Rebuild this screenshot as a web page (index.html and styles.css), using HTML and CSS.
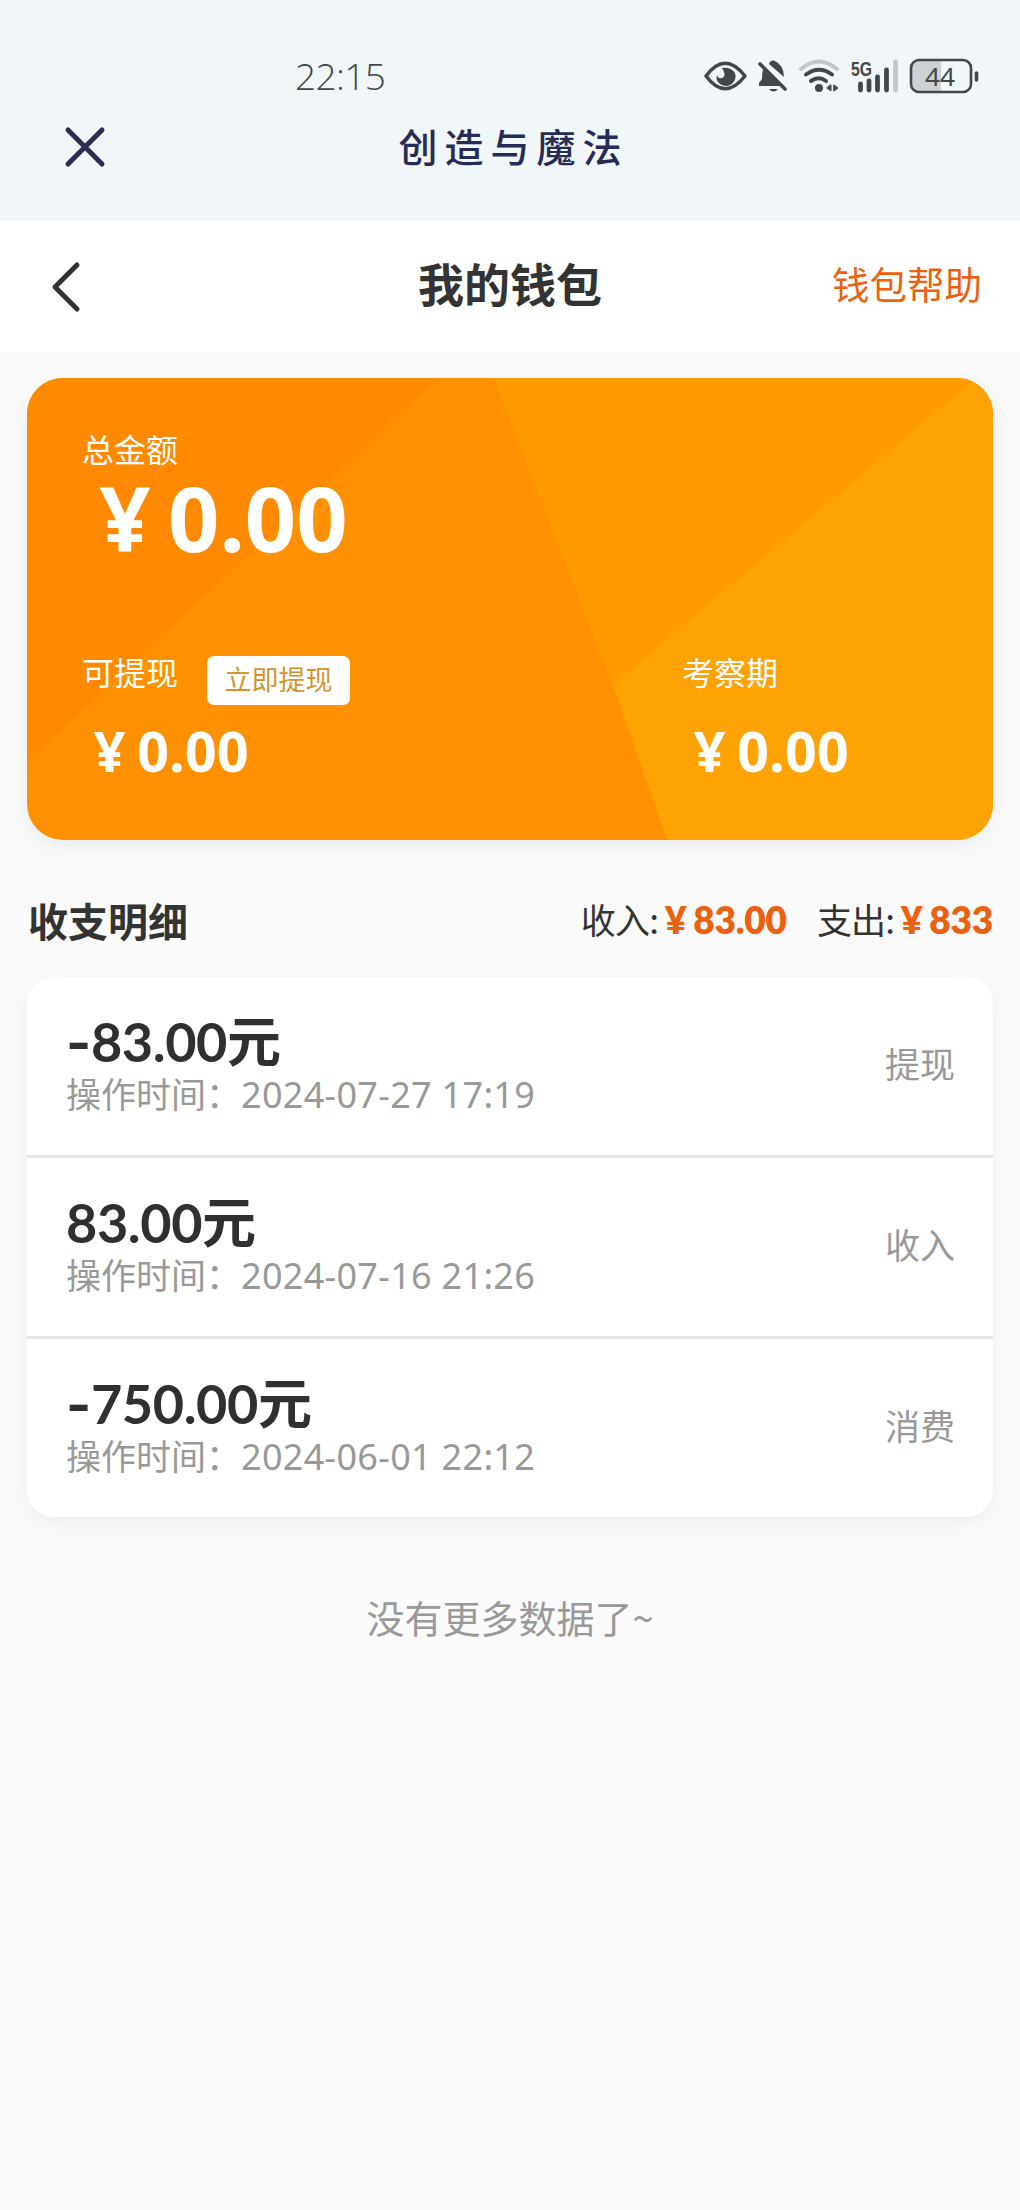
FILE: index.html
```html
<!DOCTYPE html>
<html lang="zh-CN">
<head>
<meta charset="utf-8">
<title>我的钱包</title>
<link rel="stylesheet" href="styles.css">
</head>
<body>
<header class="system">
  <div class="status">
    <span class="clock">22:15</span>
    <svg class="status-icons" width="280" height="40" viewBox="702 56 280 40" fill="none" stroke-linecap="round">
      <path d="M706 76Q725 50.500 745 76Q725 101.500 706 76Z" stroke="#434749" stroke-width="3.600" stroke-linejoin="round"/>
      <path d="M722 68Q731 67 735 73Q737 79 732 84Q726 88 720 84Q715 80 717 75Q718 79 722 78Q727 76 722 68Z" fill="#434749"/>
      <path d="M763 69Q762 74 762 79L759 83V86H781ZM769 64Q770 60 774 60.500Q784 65 784 77ZM769 89H778Q773.500 94 769 89Z" fill="#434749"/>
      <path d="M760 64L785 89" stroke="#434749" stroke-width="3.600"/>
      <path d="M801 69Q819 54 837 69" stroke="#c3c7c8" stroke-width="4"/>
      <path d="M806 74.500Q819 65 832 74.500" stroke="#434749" stroke-width="4"/>
      <path d="M811 81Q819 75.500 826 81" stroke="#434749" stroke-width="4"/>
      <circle cx="819" cy="88" r="4" fill="#434749"/>
      <path d="M831 85v6l-4-3zM834 85l4 3l-4 3z" fill="#434749" stroke="#434749" stroke-width="1"/>
      <text class="network" x="851" y="76" textLength="21" lengthAdjust="spacingAndGlyphs">5G</text>
      <path d="M860.500 84v6M869 81v9M877.500 77v13M886.500 70v20" stroke="#434749" stroke-width="4.800"/>
      <path d="M895.500 62v28" stroke="#c3c7c8" stroke-width="4.800"/>
      <path d="M919 61H941V91H919Q912 91 912 84V68Q912 61 919 61Z" fill="#ced1d3"/>
      <rect x="911" y="60" width="60" height="32" rx="8" stroke="#434749" stroke-width="2.600"/>
      <path d="M976.500 73v7" stroke="#434749" stroke-width="3.600"/>
      <text class="charge" x="925" y="86" textLength="30" lengthAdjust="spacingAndGlyphs">44</text>
    </svg>
  </div>
  <div class="app-bar">
    <svg class="close" width="44" height="44" viewBox="0 0 44 44"><path d="M5 5L39 39M39 5L5 39"/></svg>
    <span class="app-name">创造与魔法</span>
  </div>
</header>
<nav class="nav">
  <svg class="back" width="32" height="52" viewBox="0 0 32 52"><path d="M27 4L5 26L27 48"/></svg>
  <h1 class="nav-title">我的钱包</h1>
  <span class="help">钱包帮助</span>
</nav>
<main class="content">
  <section class="card">
    <svg class="card-bg" viewBox="0 0 966 462" preserveAspectRatio="none">
      <rect width="966" height="462" fill="#ff9100"/>
      <path d="M0 0H411L0 384Z" fill="#ff8900"/>
      <path d="M467 0H966V462H640L586 307Z" fill="#ffa203"/>
      <path d="M467 0H949L586 307Z" fill="#ff9a00"/>
    </svg>
    <div class="total">
      <div class="label">总金额</div>
      <div class="sum"><span class="yen">¥</span>0.00</div>
    </div>
    <div class="parts">
      <div class="part">
        <div class="part-head"><span class="label">可提现</span><span class="withdraw">立即提现</span></div>
        <div class="part-sum"><span class="yen">¥</span>0.00</div>
      </div>
      <div class="part">
        <div class="part-head"><span class="label">考察期</span></div>
        <div class="part-sum"><span class="yen">¥</span>0.00</div>
      </div>
    </div>
  </section>
  <div class="summary">
    <h2 class="summary-title">收支明细</h2>
    <span class="flow">收入:<b class="money"><span class="yen">¥</span>83.00</b></span>
    <span class="flow">支出:<b class="money"><span class="yen">¥</span>833</b></span>
  </div>
  <ul class="records">
    <li class="record">
      <div><div class="amount"><span class="minus">-</span>83.00元</div><div class="time">操作时间：<span class="date">2024-07-27 17:19</span></div></div>
      <span class="kind">提现</span>
    </li>
    <li class="record">
      <div><div class="amount">83.00元</div><div class="time">操作时间：<span class="date">2024-07-16 21:26</span></div></div>
      <span class="kind">收入</span>
    </li>
    <li class="record">
      <div><div class="amount"><span class="minus">-</span>750.00元</div><div class="time">操作时间：<span class="date">2024-06-01 22:12</span></div></div>
      <span class="kind">消费</span>
    </li>
  </ul>
  <p class="end">没有更多数据了~</p>
</main>
</body>
</html>
```
FILE: styles.css
```css
* { box-sizing: border-box; margin: 0; padding: 0; }
body {
  min-height: 2210px;
  background: #fafafa;
  color: #333;
  font-family: "Noto Sans CJK SC", sans-serif;
  white-space: nowrap;
}
.system { height: 221px; background: #f1f6f9; padding-top: 56px; }
.status { display: flex; height: 40px; padding: 0 38px 0 295px; justify-content: space-between; }
.clock { font: 300 37px/40px "Open Sans", "Noto Sans", sans-serif; color: #43474a; letter-spacing: -0.6px; }
.network { font: 700 21px "Liberation Sans", sans-serif; fill: #434749; }
.charge { font: 400 26px "Noto Sans", sans-serif; fill: #434749; }
.app-bar { display: grid; grid-template-columns: 340px 340px 340px; height: 102px; align-items: center; }
.close { margin-left: 63px; fill: none; stroke: #2c2d52; stroke-width: 5; stroke-linecap: round; }
.app-name { color: #272b55; font-size: 39px; font-weight: 500; letter-spacing: 7px; text-align: center; padding: 0 0 5px 7px; }
.nav { display: grid; grid-template-columns: 340px 340px 340px; height: 131px; align-items: center; background: #fff; }
.back { margin-left: 50px; fill: none; stroke: #333; stroke-width: 5; stroke-linecap: round; stroke-linejoin: round; }
.nav-title { font-size: 46px; font-weight: 700; text-align: center; line-height: 60px; padding-bottom: 9px; }
.help { color: #ec6110; font-size: 37.5px; text-align: right; padding: 0 38px 7px 0; line-height: 60px; }
.content { padding: 26px 27px 0; }
.card {
  position: relative;
  height: 462px;
  padding: 46px 54px 0 55px;
  border-radius: 36px;
  overflow: hidden;
  color: #fff;
  box-shadow: 0 6px 18px rgba(30, 60, 100, .08);
}
.card-bg { position: absolute; inset: 0; width: 100%; height: 100%; }
.total, .parts { position: relative; }
.total { height: 218px; }
.label { font-size: 32px; line-height: 48px; }
.yen { display: inline-block; width: 1em; text-align: center; }
.sum { font: 700 90px/90px "Noto Sans", sans-serif; }
.sum .yen { width: 86px; }
.parts { display: grid; grid-template-columns: 600px 1fr; }
.part-head { display: flex; height: 62px; gap: 29px; }
.withdraw { width: 143px; height: 49px; margin-top: 14px; border-radius: 7px; background: #fff; color: #d5932f; font-size: 27px; line-height: 45px; text-align: center; }
.part-head .label { padding-top: 5px; }
.part-sum { font: 700 56px/66px "Noto Sans", sans-serif; padding-top: 13px; }
.part-sum .yen { width: 55px; }
.summary { display: flex; height: 137px; align-items: center; padding: 22px 0 0 1px; }
.summary-title { font-size: 40px; flex: 1; line-height: 60px; }
.flow { font-size: 35px; line-height: 60px; margin-left: 30px; letter-spacing: -.8px; }
.money { font-family: Lato, "Noto Sans", sans-serif; color: #ec6110; font-size: 37px; font-weight: 800; letter-spacing: -.2px; }
.money .yen { width: 35px; }
.records { list-style: none; border-radius: 27px; background: #fff; box-shadow: 0 6px 18px rgba(0, 0, 0, .05); }
.record { display: flex; justify-content: space-between; height: 181px; padding: 34px 38px 0 39px; border-bottom: 3px solid #e4e4e4; }
.record:last-child { border-bottom: 0; height: 178px; }
.amount { font: 700 54px/62px Lato, "Noto Sans CJK SC", sans-serif; color: #303030; letter-spacing: -.4px; }
.minus { font-family: Inter, sans-serif; }
.amount, .time { height: 60px; }
.time { font-size: 35px; line-height: 44px; color: #999; }
.date { font-family: "Noto Sans", sans-serif; font-size: 36px; letter-spacing: .3px; }
.kind { font-size: 35px; line-height: 104px; color: #999; }
.end { margin-top: 71px; text-align: center; color: #999; font-size: 38px; line-height: 58px; }
```
